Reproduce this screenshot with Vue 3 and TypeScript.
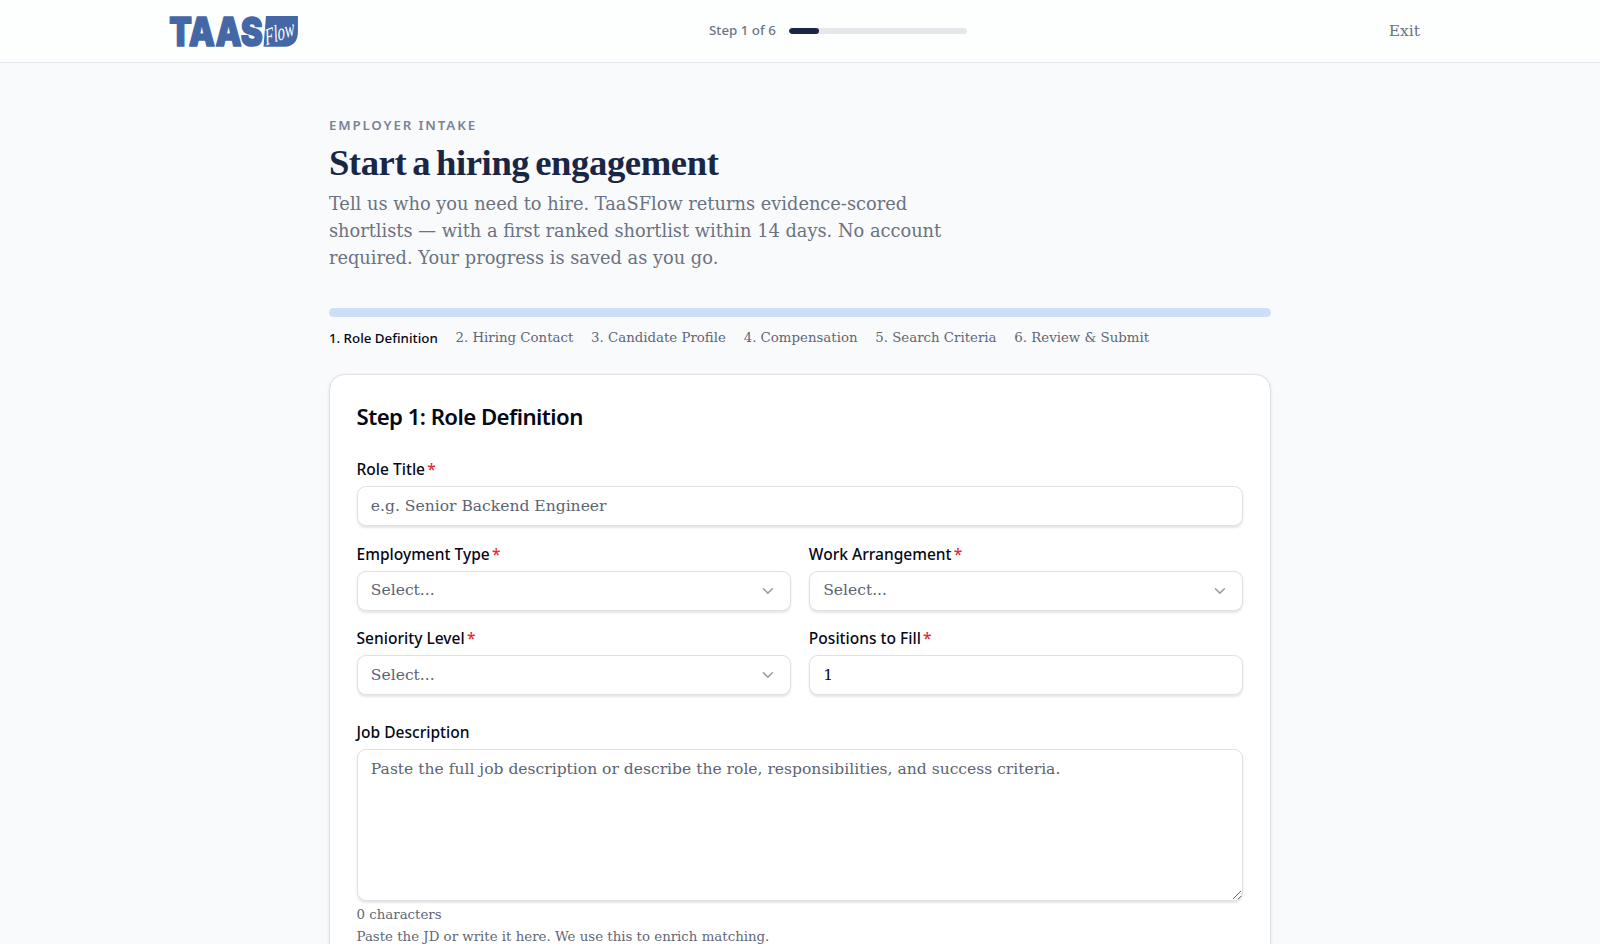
<script setup lang="ts">
import { ref } from 'vue'

interface SelectField {
  id: string
  label: string
}

const steps: string[] = [
  'Role Definition',
  'Hiring Contact',
  'Candidate Profile',
  'Compensation',
  'Search Criteria',
  'Review & Submit',
]
const current = ref(0)
const selects: SelectField[] = [
  { id: 'employment', label: 'Employment Type' },
  { id: 'arrangement', label: 'Work Arrangement' },
  { id: 'seniority', label: 'Seniority Level' },
]
const roleTitle = ref('')
const positions = ref('1')
const description = ref('')
</script>

<template>
  <div class="page">
    <header class="topbar">
      <svg class="logo" viewBox="0 0 129 33" role="img" aria-label="TaaSFlow">
        <text class="logo-name" x="0.2" y="31" textLength="93.5" lengthAdjust="spacingAndGlyphs">TAAS</text>
        <path class="logo-box" d="M97 1H129V17Q128.500 31 116 31.800H94.500Z" />
        <text class="logo-script" transform="translate(97 30.500) rotate(-20) skewX(-12)" textLength="31" lengthAdjust="spacingAndGlyphs">Flow</text>
      </svg>
      <div class="status">
        <span>Step {{ current + 1 }} of {{ steps.length }}</span>
        <div class="meter">
          <div class="meter-fill" :style="{ width: ((current + 1) / steps.length) * 100 + '%' }"></div>
        </div>
      </div>
      <a class="exit">Exit</a>
    </header>

    <main class="content">
      <p class="eyebrow">EMPLOYER INTAKE</p>
      <h1>Start a hiring engagement</h1>
      <p class="lead">
        Tell us who you need to hire. TaaSFlow returns evidence-scored shortlists — with a first
        ranked shortlist within 14 days. No account required. Your progress is saved as you go.
      </p>

      <div class="track"></div>
      <ol class="steps">
        <li v-for="(step, i) in steps" :key="step" :class="{ active: i === current }">
          {{ i + 1 }}. {{ step }}
        </li>
      </ol>

      <section class="card">
        <h2>Step 1: Role Definition</h2>
        <div class="field">
          <label for="role">Role Title<span class="req">*</span></label>
          <input id="role" v-model="roleTitle" class="control" placeholder="e.g. Senior Backend Engineer" />
        </div>
        <div class="grid">
          <div v-for="s in selects" :key="s.id" class="field">
            <label :for="s.id">{{ s.label }}<span class="req">*</span></label>
            <button :id="s.id" type="button" class="control select">
              <span>Select...</span>
              <svg class="chevron" viewBox="0 0 24 24"><path d="m6 9 6 6 6-6" /></svg>
            </button>
          </div>
          <div class="field">
            <label for="positions">Positions to Fill<span class="req">*</span></label>
            <input id="positions" v-model="positions" class="control" />
          </div>
        </div>
        <div class="field description">
          <label for="jd">Job Description</label>
          <div class="area">
            <textarea
              id="jd"
              v-model="description"
              class="control"
              placeholder="Paste the full job description or describe the role, responsibilities, and success criteria."
            ></textarea>
            <svg class="grip" viewBox="0 0 10 10"><path d="M1 9 9 1M6 9.2 9.2 6" /></svg>
          </div>
          <p class="hint">{{ description.length }} characters</p>
          <p class="hint">Paste the JD or write it here. We use this to enrich matching.</p>
        </div>
      </section>
    </main>
  </div>
</template>

<style>
html,
body {
  overflow: hidden;
  background: #f9fafc;
}
</style>

<style scoped>
* {
  box-sizing: border-box;
  margin: 0;
}
.page {
  zoom: 1.11111;
  width: 1440px;
  height: 849.6px;
  overflow: hidden;
  background: #f9fafc;
  color: #050816;
  font-family: "DejaVu Serif", serif;
}
.topbar {
  display: flex;
  align-items: center;
  height: 57px;
  padding: 0 162px 0 152px;
  background: #fdfefe;
  border-bottom: 1px solid #e3e7ed;
}
.logo {
  width: 116.1px;
  height: 29.7px;
  overflow: visible;
}
.logo-name {
  font: 900 40px Inter, "Open Sans", sans-serif;
  fill: #4467a6;
  stroke: #4467a6;
  stroke-width: 1.4;
  stroke-linejoin: round;
}
.logo-box {
  fill: #4467a6;
}
.logo-script {
  font: italic 23px "Liberation Serif", serif;
  fill: #fff;
}
.status {
  display: flex;
  align-items: center;
  gap: 12px;
  margin-left: 370px;
  font: 500 12px/16px "Noto Sans", sans-serif;
  color: #6b7588;
}
.meter {
  width: 160px;
  height: 6px;
  border-radius: 3px;
  overflow: hidden;
  background: #e6e7eb;
}
.meter-fill {
  height: 100%;
  border-radius: 3px;
  background: #1a2744;
}
.exit {
  margin: -1px 0 0 auto;
  font-size: 14px;
  line-height: 20px;
  color: #6b7280;
}
.content {
  width: 848px;
  margin: 0 auto;
  padding-top: 48px;
}
.eyebrow {
  font: 600 12px/16px "Noto Sans", sans-serif;
  letter-spacing: 1.68px;
  color: #7a8394;
}
h1 {
  margin-top: 8px;
  font: 700 33px/36px "Liberation Serif", serif;
  letter-spacing: -0.36px;
  word-spacing: -2.6px;
  white-space: nowrap;
  color: #1a2744;
}
.lead {
  width: 576px;
  margin-top: 7.2px;
  font-size: 16.03px;
  line-height: 24px;
  color: #6b7280;
}
.track {
  height: 8px;
  margin-top: 32.8px;
  border-radius: 4px;
  background: #cddff6;
}
.steps {
  display: flex;
  gap: 16px;
  margin-top: 11.2px;
  padding: 0;
  list-style: none;
  font-size: 12px;
  line-height: 16px;
  color: #5f6775;
}
.steps .active {
  padding-top: 0.6px;
  font-family: "Noto Sans", sans-serif;
  font-weight: 500;
  color: #050816;
}
.card {
  height: 620px;
  margin-top: 24px;
  padding: 23.4px 24px 24px;
  border: 1px solid #dfe1e6;
  border-radius: 14px;
  background: #fff;
  box-shadow: 0 1px 3px rgba(0, 0, 0, 0.1);
}
h2 {
  margin-bottom: 26px;
  font: 600 20px/28px "Noto Sans", sans-serif;
  letter-spacing: -0.5px;
}
.field label {
  display: flex;
  gap: 2px;
  margin-bottom: 6.6px;
  font: 500 14px/16px "Noto Sans", sans-serif;
}
.req {
  color: #dc2f35;
}
.control {
  display: block;
  width: 100%;
  height: 36px;
  padding: 4px 12px;
  border: 1px solid #dfe1e6;
  border-radius: 8px;
  outline: none;
  background: #fff;
  box-shadow: 0 1px 2px rgba(0, 0, 0, 0.1);
  font: 14px/20px "DejaVu Serif", serif;
  color: #050816;
  text-align: left;
}
.control::placeholder {
  color: #5b6472;
  opacity: 1;
}
.select {
  display: flex;
  align-items: center;
  justify-content: space-between;
  color: #5b6472;
}
.select span {
  margin-top: -0.6px;
}
.chevron {
  width: 16px;
  height: 16px;
  fill: none;
  stroke: #999ba1;
  stroke-width: 2;
  stroke-linecap: round;
  stroke-linejoin: round;
}
.grid {
  display: grid;
  grid-template-columns: 1fr 1fr;
  gap: 17.4px 16px;
  margin-top: 17.4px;
}
.description {
  margin-top: 25.7px;
}
.area {
  position: relative;
}
.area textarea {
  height: 137.4px;
  padding-top: 7.6px;
  resize: none;
}
.grip {
  position: absolute;
  right: 1px;
  bottom: 1px;
  width: 9px;
  height: 9px;
  fill: none;
  stroke: #666;
  stroke-width: 1;
}
.hint {
  margin-top: 4px;
  font-size: 12.02px;
  line-height: 16px;
  color: #5f6775;
}
</style>
